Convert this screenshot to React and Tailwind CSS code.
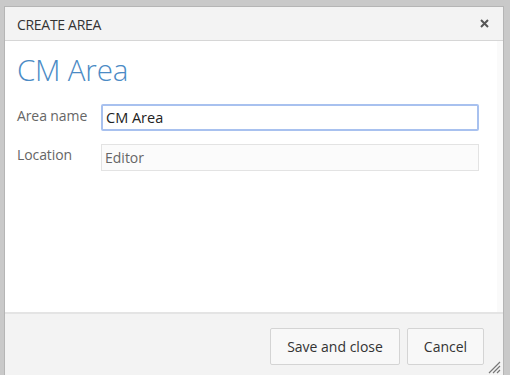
export default function App() {
  return (
    <div
      className="h-[375px] w-[510px] overflow-hidden bg-[#c9c9c9] pl-[4px] pr-[6px] pt-[6px]"
      style={{ fontFamily: '"Open Sans", "Noto Sans", sans-serif' }}
    >
      <div className="relative flex h-[380px] flex-col border border-[#b5b5b5] bg-white">
        {/* header */}
        <div className="flex h-[34px] shrink-0 items-center justify-between border-b border-[#d6d6d6] bg-[#f3f3f3] pl-[12px] pr-[14px]">
          <span className="pt-[2px] text-[14px] tracking-[-0.3px] text-[#333]">CREATE AREA</span>
          <svg width="9" height="9" viewBox="0 0 9 9" className="text-[#555]">
            <path d="M1 1L8 8M8 1L1 8" stroke="currentColor" strokeWidth="2" />
          </svg>
        </div>

        {/* body */}
        <div className="h-[271px] shrink-0 border-r-[6px] border-[#fafafa] bg-white pl-[12px] pr-[12px] pt-[10px]">
          <h1 className="text-[29.5px] font-light leading-[38px] tracking-[-0.2px] text-[#4b8bc5]">CM Area</h1>
          <div className="mt-[15px] flex items-center">
            <label className="w-[84px] pb-[4px] text-[14px] tracking-[-0.1px] text-[#666]">Area name</label>
            <div className="flex h-[27px] w-[378px] items-center rounded-[2px] border-2 border-[#a8c1ef] bg-white px-[3px] text-[14.5px] text-[#222]">
              CM Area
            </div>
          </div>
          <div className="mt-[13px] flex items-start">
            <label className="w-[84px] text-[14px] tracking-[-0.1px] text-[#666]">Location</label>
            <div className="flex h-[27px] w-[378px] items-center border border-[#e3e3e3] bg-[#fbfbfb] px-[3px] text-[14px] text-[#666]">
              Editor
            </div>
          </div>
        </div>

        {/* footer */}
        <div className="flex flex-1 justify-end gap-[7px] border-t-2 border-[#e4e4e4] bg-[#f3f3f3] pr-[19px] pt-[14px]">
          <button className="h-[37px] w-[130px] rounded-[2px] border border-[#d4d4d4] bg-[#f8f8f8] text-[14px] text-[#333]">
            Save and close
          </button>
          <button className="h-[37px] w-[77px] rounded-[2px] border border-[#d4d4d4] bg-[#f8f8f8] text-[14px] text-[#333]">
            Cancel
          </button>
        </div>

        {/* resize grip */}
        <svg width="14" height="14" viewBox="0 0 14 14" className="absolute right-[2px] top-[353px] text-[#777]">
          <path d="M13 2L2 13M13 6L6 13M13 10L10 13" stroke="currentColor" strokeWidth="1.2" />
        </svg>
      </div>
    </div>
  );
}
